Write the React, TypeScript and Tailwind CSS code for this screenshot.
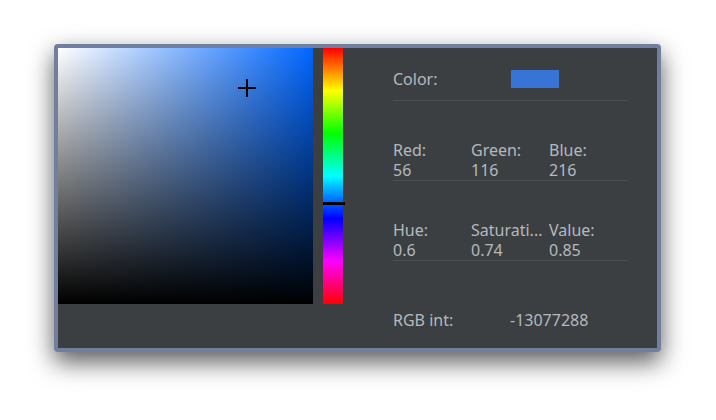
const HUE_GRADIENT =
  'bg-[linear-gradient(to_bottom,#ff0000_0%,#ffff00_16.67%,#00ff00_33.33%,#00ffff_50%,#0000ff_66.67%,#ff00ff_83.33%,#ff0000_100%)]'

function Field({ label, value }: { label: string; value: string }) {
  return (
    <div className="flex flex-col">
      <span className="h-5 leading-5 whitespace-nowrap">{label}</span>
      <span className="h-5 leading-5">{value}</span>
    </div>
  )
}

export default function App() {
  return (
    <div
      className="w-[716px] h-[420px] bg-white pl-[54px] pt-[44px]"
      style={{ fontFamily: '"Noto Sans", "Open Sans", sans-serif' }}
    >
      <div className="w-[607px] h-[308px] rounded-[4px] border-4 border-[#717f9f] bg-[#3c3f42] shadow-[0_10px_24px_rgba(0,0,0,0.65)] flex text-[16px] text-[#b4b9be]">
        {/* saturation / value square */}
        <div className="relative w-[255px] h-[256px] bg-[linear-gradient(to_right,#ffffff,#0066ff)]">
          <div className="absolute inset-0 bg-[linear-gradient(to_bottom,rgba(0,0,0,0),#000000)]" />
          <div className="absolute left-[180px] top-[31px] w-[18px] h-[18px]">
            <div className="absolute left-0 top-[8px] w-[18px] h-[2px] bg-black" />
            <div className="absolute left-[8px] top-0 w-[2px] h-[18px] bg-black" />
          </div>
        </div>

        {/* hue bar */}
        <div className={`relative ml-[10px] w-[20px] h-[256px] ${HUE_GRADIENT}`}>
          <div className="absolute left-0 top-[154px] w-[22px] h-[3px] bg-black" />
        </div>

        {/* fields */}
        <div className="ml-[50px] w-[235px] pt-[21px] flex flex-col">
          <div className="h-5 flex items-center">
            <span className="w-[118px] leading-5">Color:</span>
            <span className="w-[48px] h-[18px] bg-[#3874d8]" />
          </div>
          <div className="mt-[11px] h-px bg-[#4b4e52]" />

          <div className="mt-[39px] grid grid-cols-[78px_78px_79px] border-b border-[#4b4e52]">
            <Field label="Red:" value="56" />
            <Field label="Green:" value="116" />
            <Field label="Blue:" value="216" />
          </div>

          <div className="mt-[39px] grid grid-cols-[78px_78px_79px] border-b border-[#4b4e52]">
            <Field label="Hue:" value="0.6" />
            <Field label="Saturati..." value="0.74" />
            <Field label="Value:" value="0.85" />
          </div>

          <div className="mt-[49px] h-5 flex items-center leading-5">
            <span className="w-[117px]">RGB int:</span>
            <span>-13077288</span>
          </div>
        </div>
      </div>
    </div>
  )
}
